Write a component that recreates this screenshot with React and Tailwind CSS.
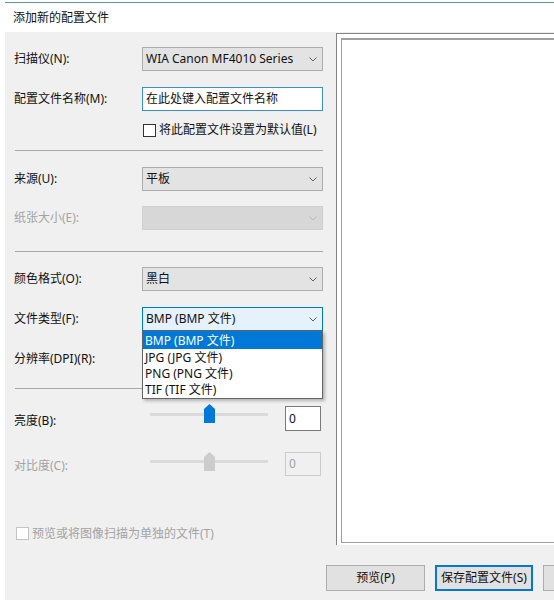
import React from "react";

function Chevron({ color }) {
  return (
    <svg width="8" height="5" viewBox="0 0 8 5">
      <polyline points="0.5,0.5 4,4 7.5,0.5" fill="none" stroke={color} strokeWidth="1" />
    </svg>
  );
}

function Select({ value, variant }) {
  let cls = "bg-[#e3e3e3] border-[#adadad] text-[#111]";
  let chev = "#5f5f5f";
  if (variant === "disabled") {
    cls = "bg-[#d7d7d7] border-[#cfcfcf] text-[#a0a0a0]";
    chev = "#b8b8b8";
  } else if (variant === "focus") {
    cls = "bg-[#e5f1fb] border-[#0078d7] text-[#111]";
  }
  return (
    <div className={`w-[181px] h-[24px] border ${cls} flex items-center justify-between pl-[3px] pr-[5px] text-[12px]`}>
      <span className="leading-none">{value}</span>
      <Chevron color={chev} />
    </div>
  );
}

function Label({ children, disabled }) {
  return (
    <div className={`w-[128px] shrink-0 text-[12px] leading-none ${disabled ? "text-[#a3a3a3]" : "text-[#111]"}`}>
      {children}
    </div>
  );
}

function Thumb({ color }) {
  return (
    <svg width="11" height="19" viewBox="0 0 11 19">
      <polygon points="0,5 5.5,0 11,5 11,19 0,19" fill={color} />
    </svg>
  );
}

export default function App() {
  return (
    <div className="w-[554px] h-[600px] bg-white overflow-hidden flex flex-col font-['Noto_Sans','Noto_Sans_CJK_SC',sans-serif] text-[#111]">
      <div className="pl-[5px] pt-[2px]">
        <div className="h-px bg-[#5a9e9f]"></div>
      </div>
      <div className="h-[29px] flex items-center pl-[13px] text-[12px]">添加新的配置文件</div>
      <div className="ml-[5px] flex-1 bg-[#f0f0f0] flex flex-col">
        <div className="h-[513px] flex">
          {/* left form */}
          <div className="w-[331px] shrink-0 pl-[9px] flex flex-col">
            <div className="mt-[15px] h-[24px] flex items-center">
              <Label>扫描仪(N):</Label>
              <Select value="WIA Canon MF4010 Series" />
            </div>
            <div className="mt-[16px] h-[24px] flex items-center">
              <Label>配置文件名称(M):</Label>
              <div className="w-[181px] h-[24px] border border-[#3c8dcc] bg-white flex items-center pl-[3px] text-[12px]">
                在此处键入配置文件名称
              </div>
            </div>
            <div className="mt-[12px] h-[14px] flex items-center pl-[129px]">
              <div className="w-[13px] h-[13px] border border-[#333] bg-white"></div>
              <span className="ml-[3px] text-[12px] leading-none">将此配置文件设置为默认值(L)</span>
            </div>
            <div className="mt-[13px] ml-[1px] w-[308px] h-px bg-[#a8a8a8]"></div>
            <div className="mt-[16px] h-[24px] flex items-center">
              <Label>来源(U):</Label>
              <Select value="平板" />
            </div>
            <div className="mt-[15px] h-[24px] flex items-center">
              <Label disabled>纸张大小(E):</Label>
              <Select value="" variant="disabled" />
            </div>
            <div className="mt-[21px] ml-[1px] w-[308px] h-px bg-[#a8a8a8]"></div>
            <div className="mt-[15px] h-[24px] flex items-center">
              <Label>颜色格式(O):</Label>
              <Select value="黑白" />
            </div>
            <div className="mt-[16px] h-[24px] flex items-center">
              <Label>文件类型(F):</Label>
              <div className="relative">
                <Select value="BMP (BMP 文件)" variant="focus" />
                <div className="absolute left-0 top-[24px] w-[181px] h-[68px] border border-[#646464] bg-white z-10 shadow-[2px_2px_3px_rgba(0,0,0,0.25)] flex flex-col text-[12px]">
                  <div className="h-[17px] flex items-center pl-[2px] bg-[#0078d7] text-white">BMP (BMP 文件)</div>
                  <div className="h-[17px] flex items-center pl-[2px]">JPG (JPG 文件)</div>
                  <div className="h-[16px] flex items-center pl-[2px]">PNG (PNG 文件)</div>
                  <div className="h-[16px] flex items-center pl-[2px]">TIF (TIF 文件)</div>
                </div>
              </div>
            </div>
            <div className="mt-[16px] h-[24px] flex items-center">
              <Label>分辨率(DPI)(R):</Label>
              <Select value="" />
            </div>
            <div className="mt-[17px] ml-[1px] w-[308px] h-px bg-[#a8a8a8]"></div>
            {/* brightness */}
            <div className="mt-[15px] h-[27px] flex items-start">
              <div className="pt-[11px]">
                <Label>亮度(B):</Label>
              </div>
              <div className="relative w-[143px] h-[27px] shrink-0">
                <div className="absolute left-[8px] top-[9px] w-[118px] h-[3px] bg-[#dadada]"></div>
                <div className="absolute left-[62px] top-0 leading-none">
                  <Thumb color="#0078d7" />
                </div>
              </div>
              <div className="mt-[2px] w-[36px] h-[25px] border border-[#7a7a7a] bg-white flex items-center pl-[3px] text-[12px]">0</div>
            </div>
            {/* contrast */}
            <div className="mt-[21px] h-[24px] flex items-start">
              <div className="pt-[8px]">
                <Label disabled>对比度(C):</Label>
              </div>
              <div className="relative w-[143px] h-[24px] shrink-0">
                <div className="absolute left-[8px] top-[8px] w-[118px] h-[3px] bg-[#dadada]"></div>
                <div className="absolute left-[62px] top-0 leading-none">
                  <Thumb color="#cccccc" />
                </div>
              </div>
              <div className="w-[36px] h-[24px] border border-[#cccccc] bg-[#f0f0f0] flex items-center pl-[3px] text-[12px] text-[#a0a0a0]">0</div>
            </div>
            <div className="mt-[51px] h-[13px] flex items-center pl-[2px]">
              <div className="w-[13px] h-[13px] border border-[#c4c4c4] bg-white"></div>
              <span className="ml-[3px] text-[12px] leading-none text-[#a3a3a3]">预览或将图像扫描为单独的文件(T)</span>
            </div>
          </div>
          {/* preview */}
          <div className="mt-[1px] w-[240px] h-[512px] shrink-0 border-l border-t border-[#838383] bg-white pl-[4px] pt-[4px]">
            <div className="h-[505px] border-t-2 border-l border-b border-[#a0a0a0] bg-white"></div>
          </div>
        </div>
        {/* buttons */}
        <div className="mt-[20px] pl-[321px] flex gap-[10px] text-[12px]">
          <div className="w-[99px] h-[26px] shrink-0 border border-[#adadad] bg-[#e1e1e1] flex items-center justify-center">预览(P)</div>
          <div className="w-[98px] h-[26px] shrink-0 border-2 border-[#0078d7] bg-[#e1e1e1] flex items-center justify-center">保存配置文件(S)</div>
          <div className="w-[99px] h-[26px] shrink-0 border border-[#adadad] bg-[#e1e1e1]"></div>
        </div>
      </div>
    </div>
  );
}
